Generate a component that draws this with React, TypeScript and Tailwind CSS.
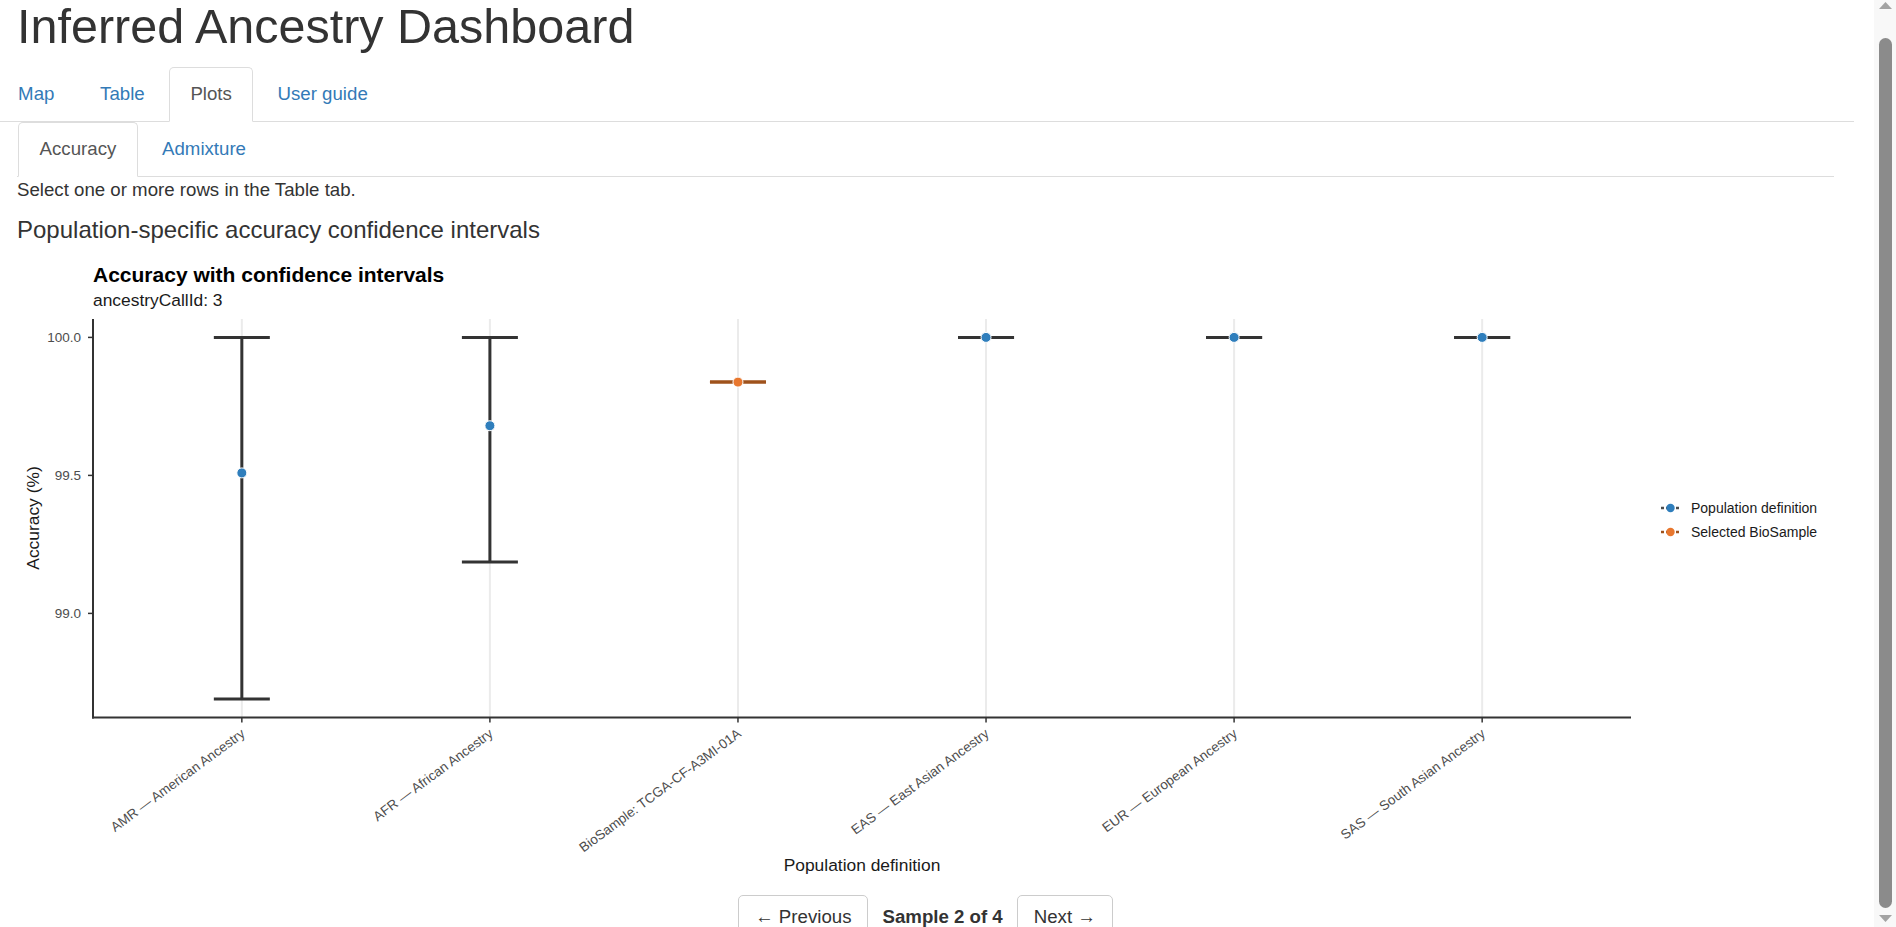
import React from "react";

type Row = { label: string; mid: number; lo: number; hi: number; sel?: boolean };

const rows: Row[] = [
  { label: "AMR — American Ancestry", mid: 99.509, lo: 98.69, hi: 100 },
  { label: "AFR — African Ancestry", mid: 99.68, lo: 99.186, hi: 100 },
  { label: "BioSample: TCGA-CF-A3MI-01A", mid: 99.838, lo: 99.838, hi: 99.838, sel: true },
  { label: "EAS — East Asian Ancestry", mid: 100, lo: 100, hi: 100 },
  { label: "EUR — European Ancestry", mid: 100, lo: 100, hi: 100 },
  { label: "SAS — South Asian Ancestry", mid: 100, lo: 100, hi: 100 },
];

const BLUE = "#2f7ebc";
const ORANGE = "#e8772e";
const BROWN = "#9f521c";

// panel box in svg coords
const PL = 76;
const PR = 1614;
const PT = 62;
const PB = 460.5;
const xS = (i: number) => PL + (0.6 + i) * ((PR - PL) / 6.2);
const yS = (v: number) => 80.4 + (100 - v) * 276;

function AccuracyPlot() {
  return (
    <svg width="1817" height="638" className="block" style={{ fontFamily: '"Liberation Sans", Arial, sans-serif' }}>
      <text x={PL} y={25} fontSize="21" fontWeight="700" fill="#000">
        Accuracy with confidence intervals
      </text>
      <text x={PL} y={49} fontSize="17.4" fill="#1a1a1a">
        ancestryCallId: 3
      </text>

      {/* vertical grid */}
      {rows.map((_, i) => (
        <line key={"g" + i} x1={xS(i)} x2={xS(i)} y1={PT} y2={PB} stroke="#ebebeb" strokeWidth="2" />
      ))}

      {/* axes */}
      <line x1={PL} x2={PL} y1={PT} y2={PB + 1} stroke="#333" strokeWidth="2" />
      <line x1={PL - 1} x2={PR} y1={PB} y2={PB} stroke="#333" strokeWidth="2" />

      {[100, 99.5, 99].map((v) => (
        <g key={v}>
          <line x1={PL - 5} x2={PL} y1={yS(v)} y2={yS(v)} stroke="#333" strokeWidth="1.5" />
          <text x={PL - 12} y={yS(v) + 4.8} fontSize="13.5" fill="#4d4d4d" textAnchor="end">
            {v.toFixed(1)}
          </text>
        </g>
      ))}

      {rows.map((r, i) => (
        <g key={"t" + i}>
          <line x1={xS(i)} x2={xS(i)} y1={PB} y2={PB + 5} stroke="#333" strokeWidth="1.5" />
          <text
            x={xS(i) + 4}
            y={PB + 18}
            fontSize="13.5"
            fill="#4d4d4d"
            textAnchor="end"
            transform={`rotate(-36.5 ${xS(i) + 4} ${PB + 18})`}
          >
            {r.label}
          </text>
        </g>
      ))}

      {/* error bars + points */}
      {rows.map((r, i) => {
        const x = xS(i);
        const c = r.sel ? BROWN : "#333";
        return (
          <g key={"e" + i}>
            <line x1={x} x2={x} y1={yS(r.hi)} y2={yS(r.lo)} stroke={c} strokeWidth="3" />
            <line x1={x - 28} x2={x + 28} y1={yS(r.hi)} y2={yS(r.hi)} stroke={c} strokeWidth="3" />
            <line x1={x - 28} x2={x + 28} y1={yS(r.lo)} y2={yS(r.lo)} stroke={c} strokeWidth="3" />
            <circle cx={x} cy={yS(r.mid)} r="5" fill={r.sel ? ORANGE : BLUE} stroke="#fff" strokeWidth="1" />
          </g>
        );
      })}

      <text
        x={16}
        y={261}
        fontSize="17.4"
        fill="#1a1a1a"
        textAnchor="middle"
        dominantBaseline="central"
        transform="rotate(-90 16 261)"
      >
        Accuracy (%)
      </text>
      <text x={(PL + PR) / 2} y={614} fontSize="17.4" fill="#1a1a1a" textAnchor="middle">
        Population definition
      </text>

      {/* legend */}
      {[
        { y: 251, c: BLUE, l: "#4d4d4d", t: "Population definition" },
        { y: 275, c: ORANGE, l: BROWN, t: "Selected BioSample" },
      ].map((k) => (
        <g key={k.t}>
          <line x1={1644} x2={1663} y1={k.y} y2={k.y} stroke={k.l} strokeWidth="2.5" strokeDasharray="3 2" />
          <circle cx={1653.5} cy={k.y} r="4.2" fill={k.c} />
          <text x={1674} y={k.y + 5} fontSize="14" fill="#1a1a1a">
            {k.t}
          </text>
        </g>
      ))}
    </svg>
  );
}

function Tab({ label, active }: { label: string; active?: boolean }) {
  return (
    <li className="mr-[2.5px] -mb-px">
      <a
        href="#"
        className={`block px-[20.6px] py-[13.33px] leading-[26.67px] border rounded-t-[5px] ${
          active ? "border-[#ddd] border-b-white bg-white text-[#555]" : "border-transparent text-[#337ab7]"
        }`}
      >
        {label}
      </a>
    </li>
  );
}

function Scrollbar() {
  return (
    <div className="w-[22px] shrink-0 h-[927px] bg-[#f8f8f8] flex flex-col items-center">
      <svg width="13" height="7" className="mt-[2px] block">
        <polygon points="6.5,0 13,7 0,7" fill="#a3a3a3" />
      </svg>
      <div className="mt-[29px] w-[13px] h-[870px] rounded-full bg-[#8b8b8b]" />
      <svg width="13" height="7" className="mt-[7px] block">
        <polygon points="0,0 13,0 6.5,7" fill="#a3a3a3" />
      </svg>
    </div>
  );
}

export default function App() {
  return (
    <div className="flex h-[927px] overflow-hidden bg-white">
      <div
        className="flex-1 min-w-0 text-[18.67px] leading-[1.42857] text-[#333]"
        style={{ fontFamily: '"Liberation Sans", Helvetica, Arial, sans-serif' }}
      >
        <h1 className="pl-[17px] mt-0 mb-[13.33px] text-[48.5px] leading-[1.1] font-normal">
          Inferred Ancestry Dashboard
        </h1>

        <div className="mr-[20px] border-b border-[#ddd]">
          <ul className="flex -ml-[3.5px]">
            <Tab label="Map" />
            <Tab label="Table" />
            <Tab label="Plots" active />
            <Tab label="User guide" />
          </ul>
        </div>

        <div className="pl-[17px] pr-[40px]">
          <ul className="flex border-b border-[#ddd] pl-[1px]">
            <Tab label="Accuracy" active />
            <Tab label="Admixture" />
          </ul>
          <div>Select one or more rows in the Table tab.</div>
          <h4 className="mt-[13.33px] mb-[13.33px] text-[24px] leading-[1.1] font-normal">
            Population-specific accuracy confidence intervals
          </h4>

          <AccuracyPlot />

          <div className="flex items-center justify-center gap-[14px] pb-[10px]">
            <button className="px-[16px] py-[8px] border border-[#ccc] rounded-[5px] bg-white text-[#333] leading-[26.67px]">
              ← Previous
            </button>
            <span className="font-bold">Sample 2 of 4</span>
            <button className="px-[16px] py-[8px] border border-[#ccc] rounded-[5px] bg-white text-[#333] leading-[26.67px]">
              Next →
            </button>
          </div>
        </div>
      </div>
      <Scrollbar />
    </div>
  );
}
